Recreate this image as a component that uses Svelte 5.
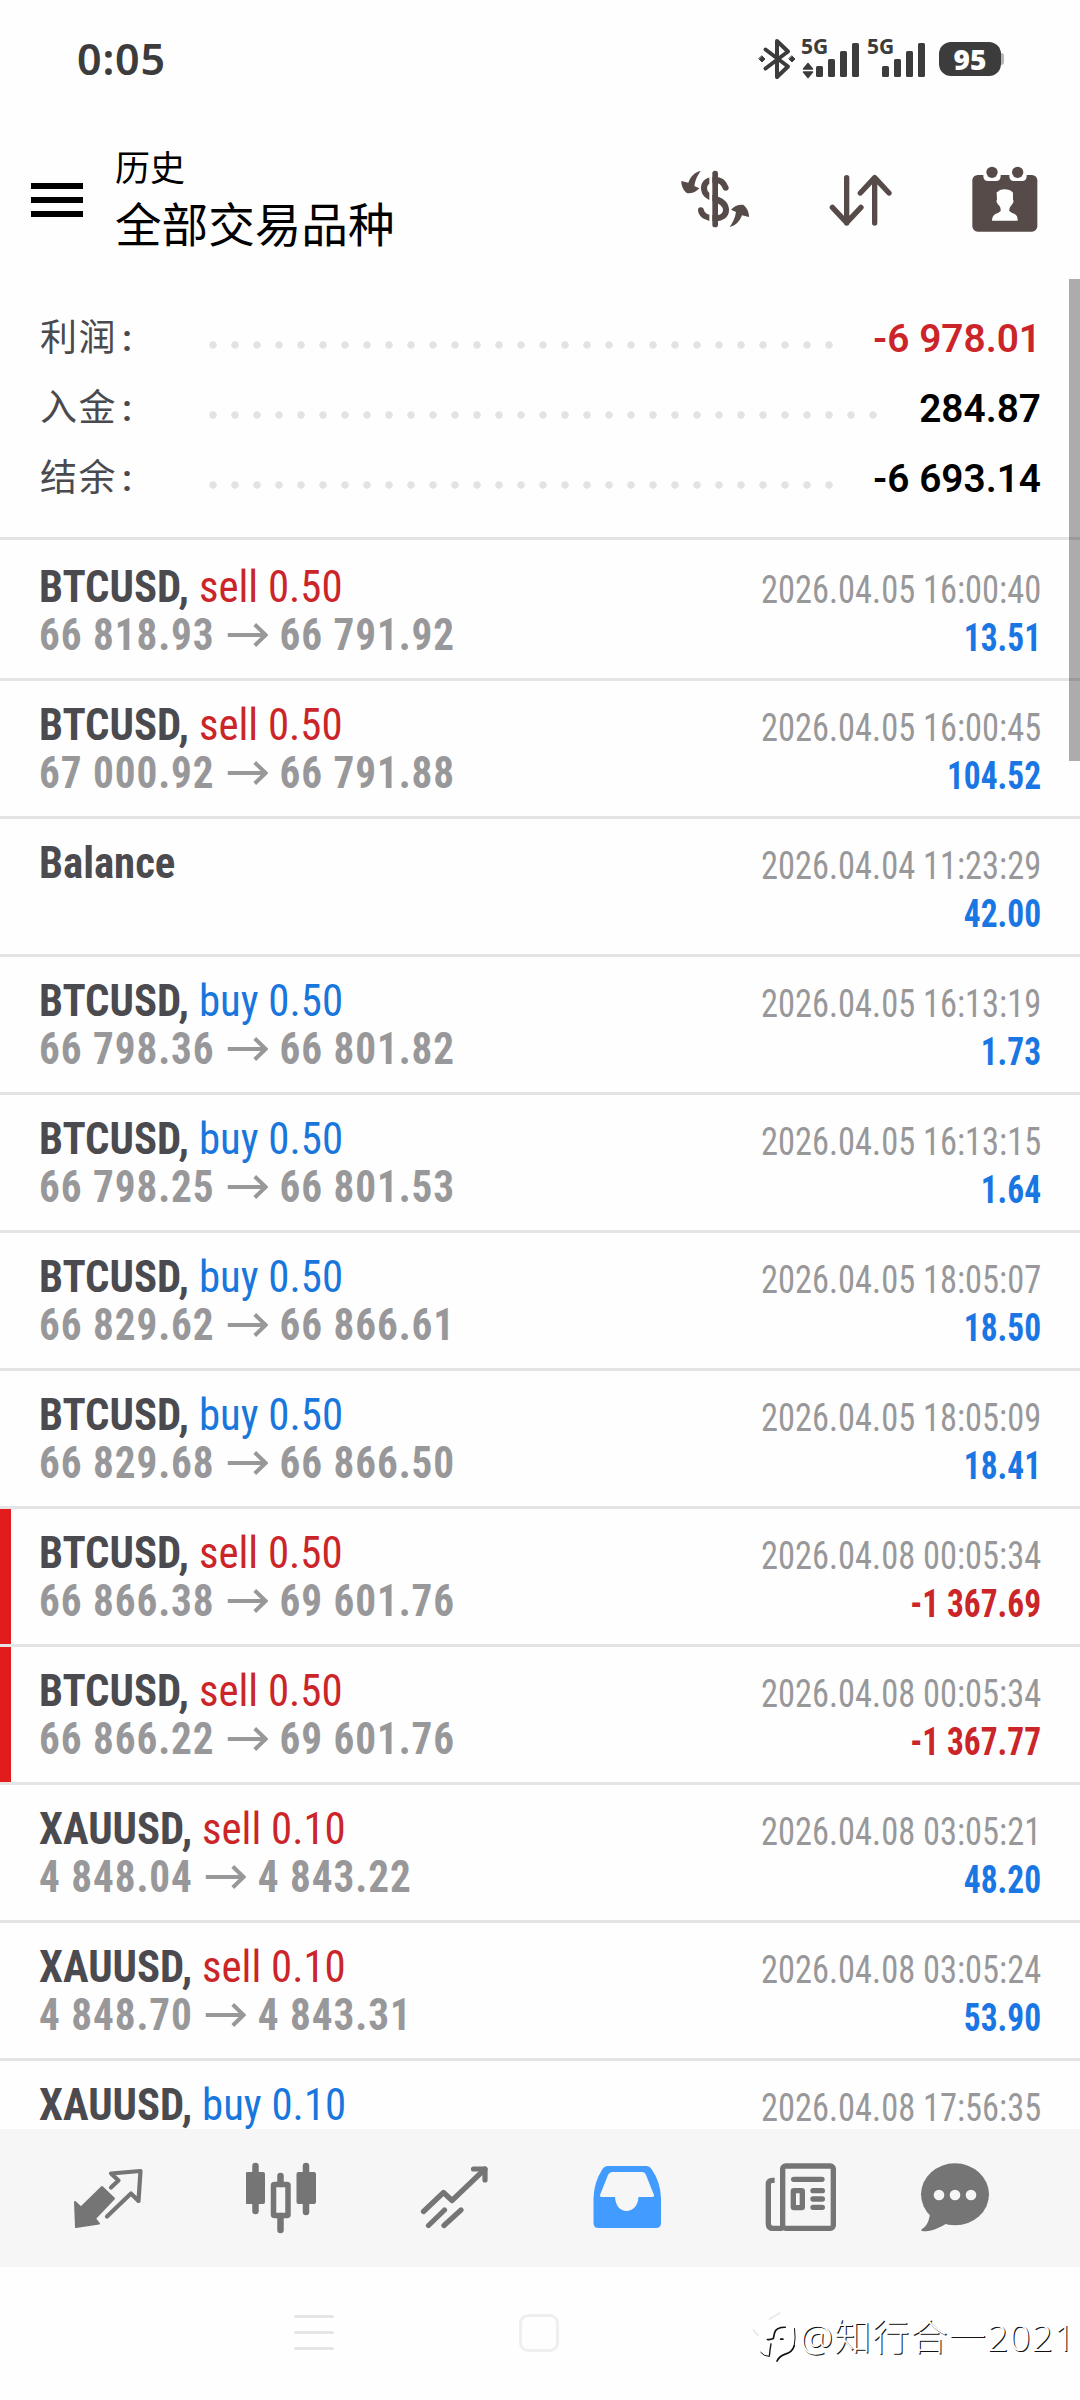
<script lang="ts">
  // Trade history screen: status bar, header, totals, deal list and the
  // bottom tab bar.

  type Deal = {
    symbol: string
    side?: 'buy' | 'sell'
    volume?: string
    open?: string
    close?: string
    time: string
    profit: string
    /** Red marker on the left edge (closed by stop loss). */
    stopped?: boolean
  }

  const totals = [
    { label: '利润', value: '-6 978.01', dots: 29, loss: true },
    { label: '入金', value: '284.87', dots: 31, loss: false },
    { label: '结余', value: '-6 693.14', dots: 29, loss: false },
  ]

  const deals: Deal[] = [
    { symbol: 'BTCUSD', side: 'sell', volume: '0.50', open: '66 818.93', close: '66 791.92', time: '2026.04.05 16:00:40', profit: '13.51' },
    { symbol: 'BTCUSD', side: 'sell', volume: '0.50', open: '67 000.92', close: '66 791.88', time: '2026.04.05 16:00:45', profit: '104.52' },
    { symbol: 'Balance', time: '2026.04.04 11:23:29', profit: '42.00' },
    { symbol: 'BTCUSD', side: 'buy', volume: '0.50', open: '66 798.36', close: '66 801.82', time: '2026.04.05 16:13:19', profit: '1.73' },
    { symbol: 'BTCUSD', side: 'buy', volume: '0.50', open: '66 798.25', close: '66 801.53', time: '2026.04.05 16:13:15', profit: '1.64' },
    { symbol: 'BTCUSD', side: 'buy', volume: '0.50', open: '66 829.62', close: '66 866.61', time: '2026.04.05 18:05:07', profit: '18.50' },
    { symbol: 'BTCUSD', side: 'buy', volume: '0.50', open: '66 829.68', close: '66 866.50', time: '2026.04.05 18:05:09', profit: '18.41' },
    { symbol: 'BTCUSD', side: 'sell', volume: '0.50', open: '66 866.38', close: '69 601.76', time: '2026.04.08 00:05:34', profit: '-1 367.69', stopped: true },
    { symbol: 'BTCUSD', side: 'sell', volume: '0.50', open: '66 866.22', close: '69 601.76', time: '2026.04.08 00:05:34', profit: '-1 367.77', stopped: true },
    { symbol: 'XAUUSD', side: 'sell', volume: '0.10', open: '4 848.04', close: '4 843.22', time: '2026.04.08 03:05:21', profit: '48.20' },
    { symbol: 'XAUUSD', side: 'sell', volume: '0.10', open: '4 848.70', close: '4 843.31', time: '2026.04.08 03:05:24', profit: '53.90' },
    { symbol: 'XAUUSD', side: 'buy', volume: '0.10', time: '2026.04.08 17:56:35', profit: '' },
  ]
</script>

{#snippet signal(active: boolean)}
  <div class="signal">
    <span class="net">5G</span>
    <svg width="59" height="40" viewBox="0 0 59 40">
      {#if active}
        <path d="M2.5 30 7 24.5 11.5 30ZM2.5 33h9L7 38.5Z" stroke-width="1.5" stroke-linejoin="round" stroke="#3c3c3c" />
      {/if}
      <rect x="15" y="27" width="7" height="11" rx="1.5" />
      <rect x="27" y="20" width="7" height="18" rx="1.5" />
      <rect x="39" y="12" width="7" height="26" rx="1.5" />
      <rect x="51" y="4" width="7" height="34" rx="1.5" />
    </svg>
  </div>
{/snippet}

<main class="screen">
  <div class="status">
    <span class="clock">0:05</span>
    <div class="indicators">
      <svg class="bluetooth" width="38" height="42" viewBox="0 0 38 42" fill="none" stroke="#3c3c3c" stroke-width="4" stroke-linecap="round" stroke-linejoin="round">
        <path d="M7.500 11.500 30 28.500 19 39V3L30 13.500 7.500 30.500" />
        <path d="M4 18 7 21 4 24 1 21ZM34 18 37 21 34 24 31 21Z" fill="#3c3c3c" stroke-width="1" />
      </svg>
      {@render signal(true)}
      {@render signal(false)}
      <div class="battery">95</div>
      <i class="nub"></i>
    </div>
  </div>

  <header>
    <button class="menu" aria-label="menu"><i></i><i></i><i></i></button>
    <div class="titles">
      <div class="title">历史</div>
      <div class="subtitle">全部交易品种</div>
    </div>
    <div class="actions">
      <svg width="70" height="60" viewBox="60 60 210 180" fill="#574b4a">
        <path d="M197 116C191 99 179 92 165 92 142 92 132 103 132 117 132 137 148 145 165 150 189 157 198 170 198 184 198 200 184 208 165 208 141 208 125 199 123 184" fill="none" stroke="#574b4a" stroke-width="18" stroke-linecap="round" />
        <path d="M152.500 75V226" stroke="#fefefe" stroke-width="9" />
        <rect x="157" y="65" width="17" height="170" rx="8" />
        <path d="M122 66C104 70 92 82 85 101L64 96C63 112 73 128 82 133 96 134 110 128 118 118L103 111C106 92 113 78 122 66Z" />
        <path d="M122 66C104 70 92 82 85 101L64 96C63 112 73 128 82 133 96 134 110 128 118 118L103 111C106 92 113 78 122 66Z" transform="rotate(180 165.500 150)" />
      </svg>
      <svg width="65" height="55" viewBox="505 65 195 165" fill="none" stroke="#574b4a" stroke-width="16" stroke-linecap="round" stroke-linejoin="round">
        <path d="M561 82V218M518 171 561 217 604 171M645 218V82M602 128 645 82 688 128" />
      </svg>
      <svg width="68" height="68" viewBox="935 43 204 204" fill="#574b4a">
        <rect x="939" y="73" width="195" height="170" rx="16" />
        <path d="M972 60H1024V77Q1024 91 1010 91H986Q972 91 972 77ZM1050 60H1102V77Q1102 91 1088 91H1064Q1050 91 1050 77Z" fill="#fefefe" />
        <circle cx="998" cy="65" r="17" />
        <circle cx="1075" cy="65" r="17" />
        <path d="M1012 125Q1018 122 1022 118 1036 114 1050 118 1058 121 1061 126V147L1063 152Q1060 161 1055 165 1049 171 1050 181 1056 187 1066 190 1076 196 1075 210H998Q998 196 1008 190 1019 187 1024 181 1025 171 1020 165 1014 161 1011 152L1013 147Z" fill="#fefefe" />
      </svg>
    </div>
  </header>

  <section class="totals">
    {#each totals as t}
      <div class="total">
        <span class="name">{t.label}<span class="colon">:</span></span>
        <span class="dots" style="width: {t.dots * 22}px"></span>
        <span class="sum" class:loss={t.loss}>{t.value}</span>
      </div>
    {/each}
  </section>

  <ul class="deals">
    {#each deals as d}
      <li class:stopped={d.stopped}>
        <div class="left">
          <div class="what">
            {#if d.side}
              <b>{d.symbol},</b> <span class={d.side}>{d.side} {d.volume}</span>
            {:else}
              <b>{d.symbol}</b>
            {/if}
          </div>
          {#if d.open}
            <div class="prices">
              {d.open}
              <svg width="45" height="24" viewBox="0 0 42 24" preserveAspectRatio="none" fill="none" stroke="#98989a" stroke-width="4">
                <path d="M1 12H39M28.500 1.500 39.500 12 28.500 22.500" />
              </svg>
              {d.close}
            </div>
          {/if}
        </div>
        <div class="right">
          <div class="time">{d.time}</div>
          <div class="profit" class:loss={d.profit.startsWith('-')}>{d.profit}</div>
        </div>
      </li>
    {/each}
  </ul>

  <nav class="tabs">
    <svg width="70" height="72" viewBox="73 2162 70 72">
      <path d="M75 2202 81 2207.500 102 2187 114 2198.500 95 2218.500 99 2223.500 76 2227Z" stroke="#757575" stroke-width="2" stroke-linejoin="round" />
      <path d="M111 2187.500 118.500 2180.500 111 2173.500 140.500 2171 138.500 2201 131 2193.500 107 2216.500" fill="none" stroke="#757575" stroke-width="4.200" stroke-linecap="round" stroke-linejoin="round" />
    </svg>
    <svg width="72" height="72" viewBox="246.500 2162 72 72">
      <rect x="246" y="2172" width="19.500" height="32" rx="2" />
      <rect x="297" y="2172" width="19.500" height="32" rx="2" />
      <path d="M256 2166V2211M306.500 2166V2212M281 2176V2184M281 2216V2230" stroke="#757575" stroke-width="6.500" stroke-linecap="round" />
      <rect x="274" y="2184.500" width="14.500" height="31" rx="1" fill="none" stroke="#757575" stroke-width="5.500" />
    </svg>
    <svg width="70" height="72" viewBox="420 2162 70 72" fill="none" stroke="#757575" stroke-width="5.200" stroke-linecap="round" stroke-linejoin="round">
      <path d="M423.500 2211.500 443.500 2192.500 452 2200.500 485 2169M428.500 2225.500 444.500 2210M444 2225.500 461 2210" />
      <path d="M473.500 2169H485V2180" />
    </svg>
    <svg width="70" height="72" viewBox="593.500 2162 70 72" fill="#429bff" fill-rule="evenodd">
      <path d="M608 2166H647Q650 2166 652 2169 661 2182 661.500 2198V2223Q661.500 2228 656.500 2228H599Q594 2228 594 2223V2198Q594.500 2182 603 2169 605 2166 608 2166ZM613 2172Q610 2172 608.500 2175L600.500 2195Q600 2197 602 2197H615.500C616 2206 621 2211 627 2211S638.500 2206 639 2197H653Q655 2197 654.500 2195L646.500 2175Q645.500 2172 642.500 2172Z" />
    </svg>
    <svg width="72" height="72" viewBox="76 395 216 216" fill="none" stroke="#757575" stroke-width="16" stroke-linecap="round">
      <rect x="129" y="407" width="152" height="187" rx="9" />
      <path d="M105 450H98Q86 450 86 462V580Q86 594 100 594H129" stroke-linecap="butt" />
      <path d="M162 447H247M220 481H248M220 506H248M220 531H248" />
      <rect x="161" y="481" width="27" height="51" rx="2" />
    </svg>
    <svg class="chat" width="70" height="72" viewBox="540 395 210 216">
      <ellipse cx="645" cy="492" rx="102" ry="93" />
      <path d="M570 550C567 575 558 589 545 597 542 600 545 603 550 603 577 602 600 592 618 580Z" />
      <g fill="#f6f6f6"><circle cx="597" cy="494" r="16" /><circle cx="645" cy="494" r="16" /><circle cx="693" cy="494" r="16" /></g>
    </svg>
  </nav>

  <footer>
    <div class="recent"><i></i><i></i><i></i></div>
    <div class="home"></div>
    <div class="mark">
      <svg width="45" height="53" viewBox="20 35 135 160" fill="none" stroke="#111" stroke-linecap="round">
        <path d="M24 92Q28 102 38 108M72 59 104 41" stroke="#e8e8e8" stroke-width="5" />
        <path d="M120 84Q92 84 88 100L84 118Q76 122 66 121" stroke-width="5" />
        <path d="M77 134Q74 148 72 171" stroke-width="4" />
        <path d="M70 172Q56 172 46 160M148 88Q152 118 147 140" stroke-width="3" />
        <path d="M147 140Q142 160 118 166 102 172 95 186M106 120H113" stroke-width="5" />
      </svg>
      <span>@知行合一2021</span>
    </div>
  </footer>

  <div class="scrollbar"></div>
</main>

<style>
  :global(body) {
    margin: 0;
    background: #fefefe;
  }
  .screen {
    position: relative;
    display: flex;
    flex-direction: column;
    width: 1080px;
    height: 2400px;
    overflow: hidden;
    background: #fefefe;
    font-family: Roboto, 'Noto Sans CJK SC', sans-serif;
  }
  svg {
    display: block;
    flex: none;
  }

  .status {
    display: flex;
    justify-content: space-between;
    height: 118px;
    padding: 0 76px 0 77px;
    color: #3c3c3c;
    fill: #3c3c3c;
  }
  .clock {
    font: 600 43px/117px 'Noto Sans', sans-serif;
    letter-spacing: 0.8px;
  }
  .indicators {
    display: flex;
    align-items: center;
  }
  .bluetooth {
    margin-right: 5px;
  }
  .signal {
    position: relative;
    margin-right: 7px;
  }
  .net {
    position: absolute;
    left: 0;
    top: -2px;
    font: 700 21px/18px 'Noto Sans', sans-serif;
  }
  .battery {
    width: 62px;
    height: 34px;
    margin-left: 6px;
    border-radius: 12px;
    background: #3c3c3c;
    color: #fff;
    font: 800 28px/34px 'Open Sans', sans-serif;
    text-align: center;
  }
  .nub {
    width: 3px;
    height: 12px;
    border-radius: 0 3px 3px 0;
    background: #b5b5b5;
  }

  header {
    display: flex;
    align-items: flex-start;
    height: 161px;
    padding: 0 41px 0 31px;
  }
  .menu {
    display: flex;
    flex-direction: column;
    gap: 8px;
    width: 52px;
    margin-top: 65px;
    padding: 0;
    border: 0;
    background: none;
  }
  .menu i {
    height: 6px;
    background: #000;
  }
  .titles {
    flex: 1;
    margin: 27px 0 0 32px;
    color: #000;
  }
  .title {
    font-size: 35px;
    line-height: 50px;
  }
  .subtitle {
    font-size: 46.600px;
    line-height: 62px;
  }
  .actions {
    display: flex;
    align-items: center;
    height: 162px;
    gap: 78px;
  }

  .totals {
    box-sizing: border-box;
    height: 261px;
    padding-top: 25px;
    border-bottom: 3px solid #e4e4e4;
  }
  .total {
    display: flex;
    height: 70px;
    padding: 0 39px 0 40px;
    line-height: 70px;
  }
  .name {
    width: 162px;
    color: #4a4a4e;
    font-size: 37px;
    letter-spacing: 1.500px;
  }
  .colon {
    margin-left: 5px;
    font-weight: 600;
  }
  .dots {
    height: 8px;
    margin-top: 37px;
    background: radial-gradient(circle, #e3e3e3 3.400px, transparent 4px) 0 0 / 22px 8px;
  }
  .sum {
    flex: 1;
    color: #000;
    font-size: 38.800px;
    font-weight: 600;
    text-align: right;
    white-space: nowrap;
  }
  .buy {
    color: #1976dc;
  }
  .sell,
  .sum.loss {
    color: #cb2529;
  }

  .deals {
    flex: 1;
    min-height: 0;
    margin: 3px 0 0;
    padding: 0;
    overflow: hidden;
    list-style: none;
    font-family: 'Roboto Condensed', Roboto, sans-serif;
  }
  li {
    display: flex;
    justify-content: space-between;
    height: 135px;
    padding: 0 39px;
    border-bottom: 3px solid #e4e4e4;
    line-height: 48px;
  }
  li.stopped {
    box-shadow: inset 11px 0 #e21b1c;
  }
  .left {
    padding-top: 20px;
    font-size: 45px;
    white-space: nowrap;
  }
  /* The face is still a bit wide at these sizes, so each line is squeezed. */
  .what {
    transform: scaleX(0.951);
    transform-origin: left;
  }
  .what b {
    color: #4a4a4f;
    font-weight: 700;
  }
  .prices {
    display: flex;
    align-items: center;
    gap: 13px;
    color: #98989a;
    font-weight: 700;
    letter-spacing: 1px;
    transform: scaleX(0.916);
    transform-origin: left;
  }
  .right {
    padding-top: 22.500px;
    font-size: 38px;
    text-align: right;
    white-space: nowrap;
  }
  .time {
    color: #98989a;
    transform: scaleX(0.906);
    transform-origin: right;
  }
  .profit {
    color: #1976e3;
    font-weight: 700;
    transform: scaleX(0.88);
    transform-origin: right;
  }
  .profit.loss {
    color: #cb2529;
  }

  .tabs {
    display: flex;
    align-items: center;
    justify-content: space-between;
    box-sizing: border-box;
    height: 138px;
    padding: 0 90px 0 73px;
    background: #f6f6f6;
    fill: #757575;
  }
  .chat {
    margin-left: -20px;
  }

  footer {
    display: flex;
    height: 133px;
    padding-left: 294px;
  }
  .recent {
    display: flex;
    flex-direction: column;
    gap: 13px;
    width: 40px;
    margin-top: 48px;
  }
  .recent i {
    height: 3px;
    border-radius: 2px;
    background: #e6e6e6;
  }
  .home {
    box-sizing: border-box;
    width: 40px;
    height: 38px;
    margin: 47px 0 0 185px;
    border: 3px solid #efefef;
    border-radius: 9px;
  }
  .mark {
    display: flex;
    align-items: flex-start;
    margin: 44px 0 0 193px;
    white-space: nowrap;
  }
  .mark span {
    margin-left: 3px;
    color: #fff;
    font: 300 37px/52px 'Noto Sans', 'Noto Sans CJK SC', sans-serif;
    letter-spacing: 1.200px;
    text-shadow: 1px 1px 0.500px #111;
  }

  .scrollbar {
    position: absolute;
    top: 279px;
    right: 0;
    width: 11px;
    height: 482px;
    background: rgba(0, 0, 0, 0.32);
  }
</style>
